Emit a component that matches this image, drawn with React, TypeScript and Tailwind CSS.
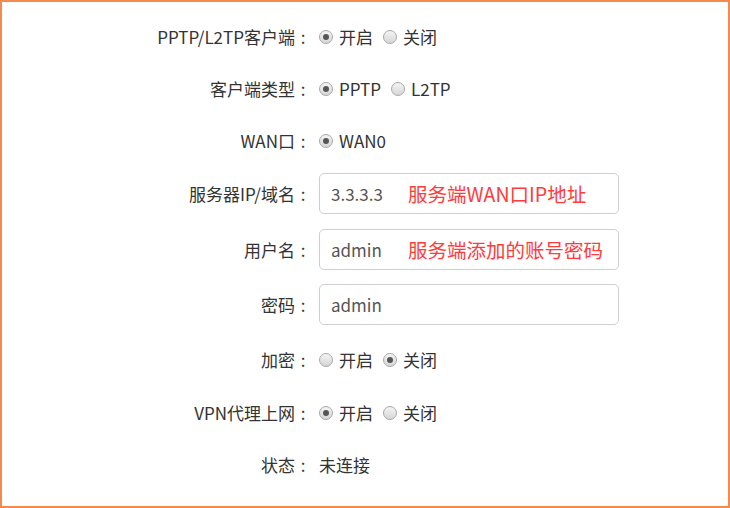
import React from "react";

const FONT = { fontFamily: '"Microsoft YaHei", "Noto Sans CJK SC", "Noto Sans", sans-serif' };

function Radio({ checked, label }: { checked?: boolean; label: string }) {
  return (
    <label className="flex items-center mr-[10px]">
      <span className="w-[14px] h-[14px] rounded-full border border-[#a8a8a8] bg-gradient-to-b from-[#f4f4f4] to-[#d6d6d6] flex items-center justify-center">
        {checked && <span className="w-[6px] h-[6px] rounded-full bg-[#555]" />}
      </span>
      <span className="ml-[6px]">{label}</span>
    </label>
  );
}

function Row({ label, mb, children }: { label: string; mb: string; children: React.ReactNode }) {
  return (
    <div className={`flex items-center h-[41px] ${mb}`}>
      <div className="w-[293px] text-right">{label}</div>
      <div className="w-[16px] text-center">:</div>
      <div className="ml-[8px] flex items-center">{children}</div>
    </div>
  );
}

function Input({ value, hint }: { value: string; hint?: string }) {
  return (
    <div className="w-[300px] h-[41px] border border-[#cfcfcf] rounded-[5px] flex items-center pl-[11px] text-[#555]">
      <span className="w-[77px]">{value}</span>
      {hint && <span className="text-[#ff3b3b] text-[19.5px] leading-none">{hint}</span>}
    </div>
  );
}

export default function App() {
  return (
    <div
      className="w-[730px] h-[508px] border-2 border-[#f58a4e] bg-white text-[17px] text-[#333] pt-[14px]"
      style={FONT}
    >
      <Row label="PPTP/L2TP客户端" mb="mb-[11px]">
        <Radio checked label="开启" />
        <Radio label="关闭" />
      </Row>
      <Row label="客户端类型" mb="mb-[11px]">
        <Radio checked label="PPTP" />
        <Radio label="L2TP" />
      </Row>
      <Row label="WAN口" mb="mb-[12px]">
        <Radio checked label="WAN0" />
      </Row>
      <Row label="服务器IP/域名" mb="mb-[15px]">
        <Input value="3.3.3.3" hint="服务端WAN口IP地址" />
      </Row>
      <Row label="用户名" mb="mb-[14px]">
        <Input value="admin" hint="服务端添加的账号密码" />
      </Row>
      <Row label="密码" mb="mb-[14px]">
        <Input value="admin" />
      </Row>
      <Row label="加密" mb="mb-[12px]">
        <Radio label="开启" />
        <Radio checked label="关闭" />
      </Row>
      <Row label="VPN代理上网" mb="mb-[11px]">
        <Radio checked label="开启" />
        <Radio label="关闭" />
      </Row>
      <Row label="状态" mb="mb-0">
        <span>未连接</span>
      </Row>
    </div>
  );
}
